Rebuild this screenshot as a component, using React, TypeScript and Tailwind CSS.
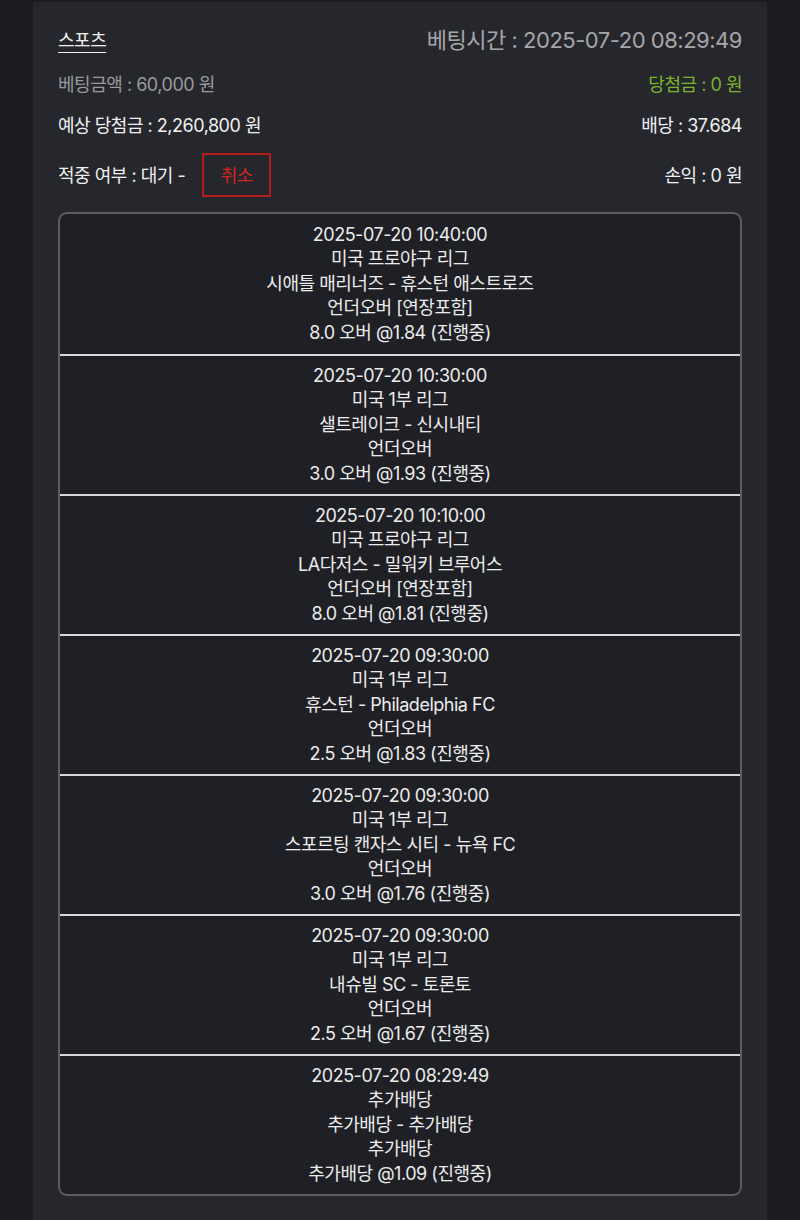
import React from "react";

const items = [
  ["2025-07-20 10:40:00", "미국 프로야구 리그", "시애틀 매리너즈 - 휴스턴 애스트로즈", "언더오버 [연장포함]", "8.0 오버 @1.84 (진행중)"],
  ["2025-07-20 10:30:00", "미국 1부 리그", "샐트레이크 - 신시내티", "언더오버", "3.0 오버 @1.93 (진행중)"],
  ["2025-07-20 10:10:00", "미국 프로야구 리그", "LA다저스 - 밀워키 브루어스", "언더오버 [연장포함]", "8.0 오버 @1.81 (진행중)"],
  ["2025-07-20 09:30:00", "미국 1부 리그", "휴스턴 - Philadelphia FC", "언더오버", "2.5 오버 @1.83 (진행중)"],
  ["2025-07-20 09:30:00", "미국 1부 리그", "스포르팅 캔자스 시티 - 뉴욕 FC", "언더오버", "3.0 오버 @1.76 (진행중)"],
  ["2025-07-20 09:30:00", "미국 1부 리그", "내슈빌 SC - 토론토", "언더오버", "2.5 오버 @1.67 (진행중)"],
  ["2025-07-20 08:29:49", "추가배당", "추가배당 - 추가배당", "추가배당", "추가배당 @1.09 (진행중)"],
];

export default function App() {
  return (
    <div
      className="w-[800px] h-[1220px] bg-[#1c1d21] overflow-hidden flex justify-center pt-[2px] tracking-[-0.03em]"
      style={{ fontFamily: 'Inter, "Noto Sans CJK KR", sans-serif' }}
    >
      <div className="w-[734px] h-full bg-[#26272c] px-[25px] pt-[23px]">
        <div className="flex justify-between items-center h-[30px]">
          <span className="text-[18px] text-[#f0f0f0] underline underline-offset-[5px] decoration-1">스포츠</span>
          <span className="text-[22px] text-[#a6a6aa]">베팅시간 : 2025-07-20 08:29:49</span>
        </div>
        <div className="flex justify-between items-center h-[28px] mt-[15px]">
          <span className="text-[18px] text-[#9a9a9e]">베팅금액 : 60,000 원</span>
          <span className="text-[18px] text-[#7cb32c]">당첨금 : 0 원</span>
        </div>
        <div className="flex justify-between items-center h-[28px] mt-[13px]">
          <span className="text-[18px] text-[#f0f0f0]">예상 당첨금 : 2,260,800 원</span>
          <span className="text-[18px] text-[#f0f0f0]">배당 : 37.684</span>
        </div>
        <div className="flex justify-between items-center h-[44px] mt-[14px]">
          <div className="flex items-center">
            <span className="text-[18px] text-[#f0f0f0]">적중 여부 : 대기 -</span>
            <div className="ml-[17px] w-[69px] h-[44px] border-2 border-[#b51c1c] flex items-center justify-center text-[18px] text-[#d42525]">
              취소
            </div>
          </div>
          <span className="text-[18px] text-[#f0f0f0]">손익 : 0 원</span>
        </div>
        <div className="mt-[15px] border-2 border-[#5c5d62] rounded-[9px] bg-[#1f2025] overflow-hidden">
          {items.map((it, i) => (
            <div
              key={i}
              className={`flex flex-col items-center justify-center h-[140px] text-[18px] leading-[24.5px] text-[#ececec] ${i > 0 ? "border-t-2 border-[#d8d8d8]" : ""}`}
            >
              {it.map((l, j) => (
                <div key={j}>{l}</div>
              ))}
            </div>
          ))}
        </div>
      </div>
    </div>
  );
}
